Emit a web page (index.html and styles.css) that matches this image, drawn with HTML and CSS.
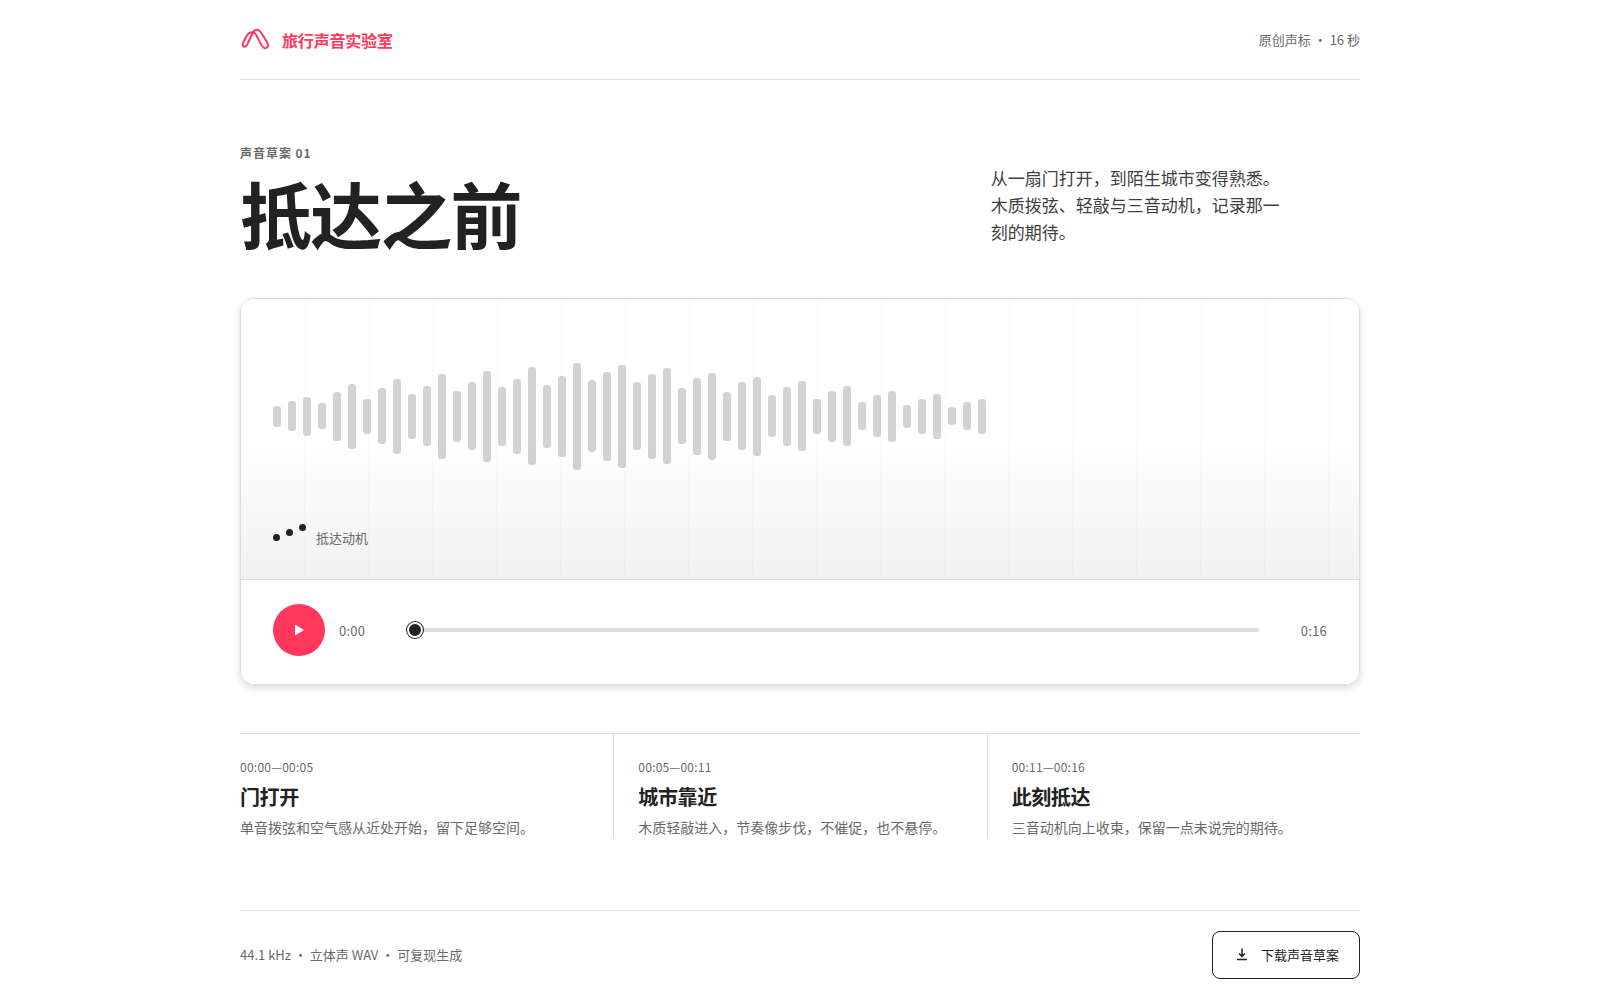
FILE: index.html
```html
<!DOCTYPE html>
<html lang="zh-CN">
<head>
<meta charset="utf-8">
<meta name="viewport" content="width=device-width, initial-scale=1">
<title>抵达之前 · 旅行声音实验室</title>
<link rel="stylesheet" href="styles.css">
</head>
<body>
<div class="page">
  <header class="site-header">
    <div class="brand">
      <svg class="brand-mark" viewBox="0 0 32 32" aria-hidden="true">
        <path d="M13.500 8.300C10 7.800 8 9.500 6.500 12L3.200 18.500C1.500 22 4.500 24.500 7 21L12 10.500C13.500 7 14.500 5.800 16.500 5.800C19 5.800 20.500 7.500 22 10L27 18C29.500 22.500 26.500 25.500 23.500 23.500C21 21.500 19.500 17 17 12.500C15.800 10 15 8.600 13.500 8.300Z"/>
      </svg>
      <span>旅行声音实验室</span>
    </div>
    <span class="meta">原创声标 · 16 秒</span>
  </header>

  <main>
    <section class="hero">
      <div>
        <p class="eyebrow">声音草案 01</p>
        <h1>抵达之前</h1>
      </div>
      <p class="intro">从一扇门打开，到陌生城市变得熟悉。木质拨弦、轻敲与三音动机，记录那一刻的期待。</p>
    </section>

    <section class="player" aria-label="声音播放器">
      <div class="stage">
        <div class="wave" id="wave" aria-hidden="true"></div>
        <div class="motif">
          <span class="dots" aria-hidden="true"><i></i><i></i><i></i></span>
          <span>抵达动机</span>
        </div>
      </div>
      <div class="controls">
        <button class="play" type="button" aria-label="播放">
          <svg viewBox="0 0 20 20" aria-hidden="true"><path d="M6 4.500v11l9-5.500z"/></svg>
        </button>
        <span class="time">0:00</span>
        <input class="seek" type="range" min="0" max="16" value="0" aria-label="播放进度">
        <span class="time time-end">0:16</span>
      </div>
    </section>

    <section class="chapters">
      <article class="chapter">
        <p class="range">00:00—00:05</p>
        <h2>门打开</h2>
        <p>单音拨弦和空气感从近处开始，留下足够空间。</p>
      </article>
      <article class="chapter">
        <p class="range">00:05—00:11</p>
        <h2>城市靠近</h2>
        <p>木质轻敲进入，节奏像步伐，不催促，也不悬停。</p>
      </article>
      <article class="chapter">
        <p class="range">00:11—00:16</p>
        <h2>此刻抵达</h2>
        <p>三音动机向上收束，保留一点未说完的期待。</p>
      </article>
    </section>
  </main>

  <footer class="site-footer">
    <span class="meta">44.1 kHz · 立体声 WAV · 可复现生成</span>
    <button class="download" type="button">
      <svg viewBox="0 0 18 18" aria-hidden="true"><path d="M9 2.500v8M6 7.500l3 3 3-3M4 13.500h10"/></svg>
      下载声音草案
    </button>
  </footer>
</div>
<script src="wave.js"></script>
</body>
</html>
```
FILE: wave.js
```js
const levels = [
  21, 30, 39, 26, 49, 65, 35, 56, 75, 45, 60, 85,
  51, 68, 91, 59, 75, 98, 63, 81, 107, 72, 89, 103,
  68, 85, 96, 56, 77, 87, 49, 68, 79, 42, 59, 70,
  35, 51, 60, 28, 42, 51, 23, 35, 45, 18, 28, 35
];
const wave = document.getElementById("wave");
for (const level of levels) {
  const bar = document.createElement("span");
  bar.className = "bar";
  bar.style.height = level + "px";
  wave.append(bar);
}
```
FILE: styles.css
```css
:root {
  --ink: #222;
  --muted: #6a6a6a;
  --line: #ddd;
  --accent: #ff385c;
}

* {
  box-sizing: border-box;
}

body {
  margin: 0;
  background: #fff;
  color: var(--ink);
  font-family: "Noto Sans CJK SC", sans-serif;
  font-size: 14px;
  line-height: 1.5;
}

h1, h2, p {
  margin: 0;
}

button, input {
  font: inherit;
}

.page {
  max-width: 1120px;
  margin: 0 auto;
}

.site-header {
  display: flex;
  align-items: center;
  justify-content: space-between;
  min-height: 80px;
  border-bottom: 1px solid var(--line);
}

.brand {
  display: flex;
  align-items: center;
  gap: 10px;
  color: var(--accent);
  font-size: 16px;
  font-weight: 700;
  letter-spacing: -0.01em;
}

.brand-mark {
  width: 32px;
  height: 32px;
  fill: none;
  stroke: currentColor;
  stroke-width: 2;
  stroke-linejoin: round;
}

.meta {
  color: var(--muted);
  font-size: 13px;
}

.hero {
  display: grid;
  grid-template-columns: 2fr 1fr;
  gap: 12px;
  align-items: end;
  padding: 64px 0 48px;
}

.eyebrow {
  margin-bottom: 12px;
  color: var(--muted);
  font-size: 12px;
  font-weight: 700;
  letter-spacing: 0.08em;
}

h1 {
  font-size: 72px;
  font-weight: 700;
  line-height: 76px;
  letter-spacing: -0.025em;
}

.intro {
  max-width: 300px;
  padding-bottom: 5px;
  color: #3f3f3f;
  font-size: 17px;
  line-height: 27px;
}

.player {
  overflow: hidden;
  border: 1px solid var(--line);
  border-radius: 14px;
  box-shadow: 0 0 0 1px rgba(0, 0, 0, 0.02), 0 2px 6px rgba(0, 0, 0, 0.04), 0 4px 8px rgba(0, 0, 0, 0.1);
}

.stage {
  padding: 55px 32px 31px;
  background:
    repeating-linear-gradient(90deg, transparent 0 63px, rgba(0, 0, 0, 0.02) 63px 64px),
    linear-gradient(#fff 50%, #f1f1f1);
}

.wave {
  display: flex;
  align-items: center;
  gap: 7px;
  height: 124px;
}

.bar {
  width: 8px;
  border-radius: 3px;
  background: rgba(34, 34, 34, 0.2);
}

.motif {
  display: flex;
  align-items: center;
  gap: 10px;
  margin-top: 49px;
  color: var(--muted);
  font-size: 13px;
  line-height: 21px;
}

.dots {
  display: flex;
  gap: 6px;
}

.dots i {
  width: 7px;
  height: 7px;
  border-radius: 50%;
  background: var(--ink);
}

.dots i:nth-child(2) {
  transform: translateY(-5px);
}

.dots i:nth-child(3) {
  transform: translateY(-10px);
}

.controls {
  display: flex;
  align-items: center;
  gap: 14px;
  padding: 24px 32px 28px;
  border-top: 1px solid var(--line);
  background: #fff;
}

.play {
  display: grid;
  place-items: center;
  flex: none;
  width: 52px;
  height: 52px;
  padding: 0;
  border: 0;
  border-radius: 50%;
  background: var(--accent);
  color: #fff;
}

.play svg {
  width: 20px;
  height: 20px;
  fill: currentColor;
}

.time {
  flex: none;
  width: 54px;
  color: var(--muted);
  font-size: 13px;
  line-height: 21px;
  letter-spacing: 0.02em;
  font-variant-numeric: tabular-nums;
}

.time-end {
  text-align: right;
}

.seek {
  flex: 1;
  min-width: 0;
  height: 20px;
  margin: 0;
  appearance: none;
  background: transparent;
}

.seek::-webkit-slider-runnable-track {
  height: 4px;
  border-radius: 2px;
  background: var(--line);
}

.seek::-webkit-slider-thumb {
  appearance: none;
  width: 16px;
  height: 16px;
  margin-top: -6px;
  border: 2px solid #fff;
  border-radius: 50%;
  background: var(--ink);
  box-shadow: 0 0 0 1px var(--ink);
}

.chapters {
  display: grid;
  grid-template-columns: repeat(3, 1fr);
  margin-top: 48px;
  border-top: 1px solid var(--line);
}

.chapter {
  padding: 24px 24px 0 0;
  color: var(--muted);
}

.chapter + .chapter {
  padding-left: 24px;
  border-left: 1px solid var(--line);
}

.range {
  font-size: 12px;
  letter-spacing: 0.02em;
}

.chapter h2 {
  margin: 7px 0 6px;
  color: var(--ink);
  font-size: 20px;
  line-height: 28px;
  letter-spacing: -0.02em;
}

.site-footer {
  display: flex;
  align-items: center;
  justify-content: space-between;
  margin-top: 72px;
  padding: 20px 0;
  border-top: 1px solid var(--line);
}

.download {
  display: flex;
  align-items: center;
  justify-content: center;
  gap: 10px;
  min-width: 148px;
  min-height: 48px;
  padding: 0 20px;
  border: 1px solid var(--ink);
  border-radius: 8px;
  background: #fff;
  color: var(--ink);
  font-size: 13px;
}

.download svg {
  width: 18px;
  height: 18px;
  fill: none;
  stroke: currentColor;
  stroke-width: 1.500;
}

@media (max-width: 1160px) {
  .page {
    padding: 0 20px;
  }
}

@media (max-width: 760px) {
  .hero, .chapters {
    grid-template-columns: 1fr;
  }

  .wave {
    gap: 2px;
  }

  .chapter + .chapter {
    padding-left: 0;
    border-left: 0;
  }
}
```
